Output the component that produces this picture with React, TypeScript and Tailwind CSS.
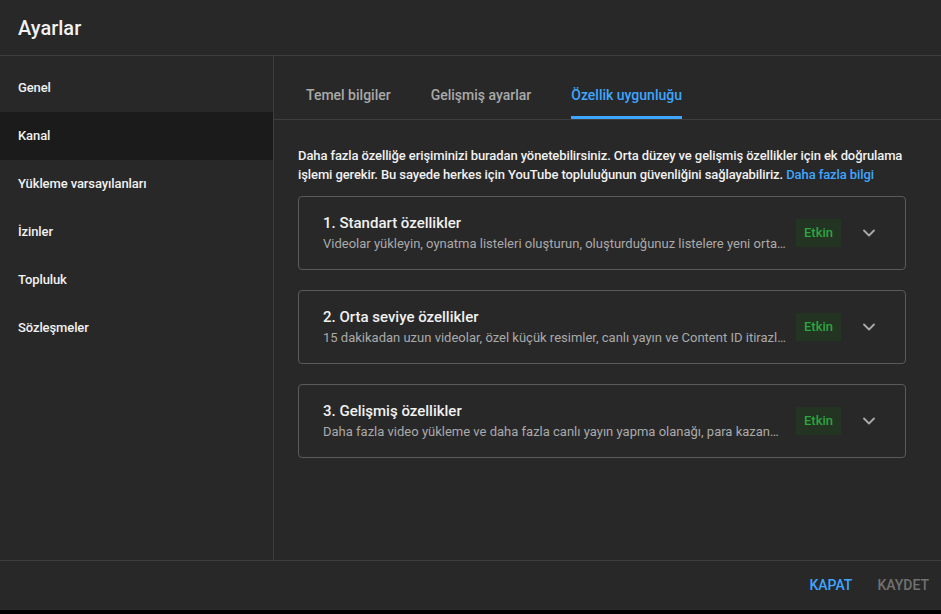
import { ChevronDown } from 'lucide-react';

const sections = ['Genel', 'Kanal', 'Yükleme varsayılanları', 'İzinler', 'Topluluk', 'Sözleşmeler'];
const tabs = ['Temel bilgiler', 'Gelişmiş ayarlar', 'Özellik uygunluğu'];

const features = [
  { title: '1. Standart özellikler', desc: 'Videolar yükleyin, oynatma listeleri oluşturun, oluşturduğunuz listelere yeni orta seviye özellikler ekleyin' },
  { title: '2. Orta seviye özellikler', desc: '15 dakikadan uzun videolar, özel küçük resimler, canlı yayın ve Content ID itirazları için başvurun' },
  { title: '3. Gelişmiş özellikler', desc: 'Daha fazla video yükleme ve daha fazla canlı yayın yapma olanağı, para kazanma özellikleri' },
];

export default function App() {
  return (
    <div className="h-[614px] w-[941px] bg-black overflow-hidden" style={{ fontFamily: 'Roboto, "Noto Sans", sans-serif' }}>
      <div className="h-[610px] bg-[#282828] text-white flex flex-col">
        <div className="h-[56px] shrink-0 border-b border-[#3e3e3e] flex items-center px-[18px]">
          <h1 className="text-[20px] font-medium text-[#f1f1f1]">Ayarlar</h1>
        </div>

        <div className="flex flex-1 min-h-0">
          <nav className="w-[274px] shrink-0 border-r border-[#3e3e3e] pt-[8px]">
            {sections.map((s) => (
              <div key={s} className={`h-[48px] flex items-center px-[18px] text-[13px] font-medium tracking-[-0.1px] text-[#f1f1f1] ${s === 'Kanal' ? 'bg-[#1b1b1b]' : ''}`}>
                {s}
              </div>
            ))}
          </nav>

          <div className="flex-1 min-w-0">
            <div className="h-[64px] border-b border-[#3e3e3e] flex pl-[32px] gap-[40px]">
              {tabs.map((t, i) => (
                <div key={t} className={`h-full flex items-center pt-[18px] text-[14px] font-medium border-b-[3px] ${i === 2 ? 'text-[#3ea6ff] border-[#3ea6ff]' : 'text-[#aaaaaa] border-transparent'}`}>
                  {t}
                </div>
              ))}
            </div>

            <div className="pl-[24px] pr-[30px] pt-[26px]">
              <p className="text-[13px] font-medium tracking-[-0.1px] leading-[19px] text-[#f1f1f1]">
                Daha fazla özelliğe erişiminizi buradan yönetebilirsiniz. Orta düzey ve gelişmiş özellikler için ek doğrulama işlemi gerekir. Bu sayede herkes için YouTube topluluğunun güvenliğini sağlayabiliriz.{' '}
                <span className="text-[#3ea6ff]">Daha fazla bilgi</span>
              </p>

              <div className="mt-[12px] mr-[5px] flex flex-col gap-[20px]">
                {features.map((f) => (
                  <div key={f.title} className="h-[74px] border border-[#5a5a5a] rounded-[4px] flex items-center pl-[24px] pr-[26px]">
                    <div className="flex-1 min-w-0">
                      <div className="text-[15px] font-medium leading-[20px] text-[#f1f1f1]">{f.title}</div>
                      <div className="text-[13px] leading-[18px] text-[#aaaaaa] truncate mt-[2px]">{f.desc}</div>
                    </div>
                    <div className="ml-[10px] w-[45px] h-[28px] bg-[#233423] text-[#2ba640] text-[13px] font-medium flex items-center justify-center">
                      Etkin
                    </div>
                    <ChevronDown className="ml-[18px] w-[20px] h-[20px] text-[#aaaaaa]" strokeWidth={2.2} />
                  </div>
                ))}
              </div>
            </div>
          </div>
        </div>

        <div className="h-[50px] shrink-0 border-t border-[#3e3e3e] flex items-center justify-end pr-[12px] gap-[25px] text-[14px] font-medium">
          <span className="text-[#3ea6ff]">KAPAT</span>
          <span className="text-[#717171]">KAYDET</span>
        </div>
      </div>
    </div>
  );
}
